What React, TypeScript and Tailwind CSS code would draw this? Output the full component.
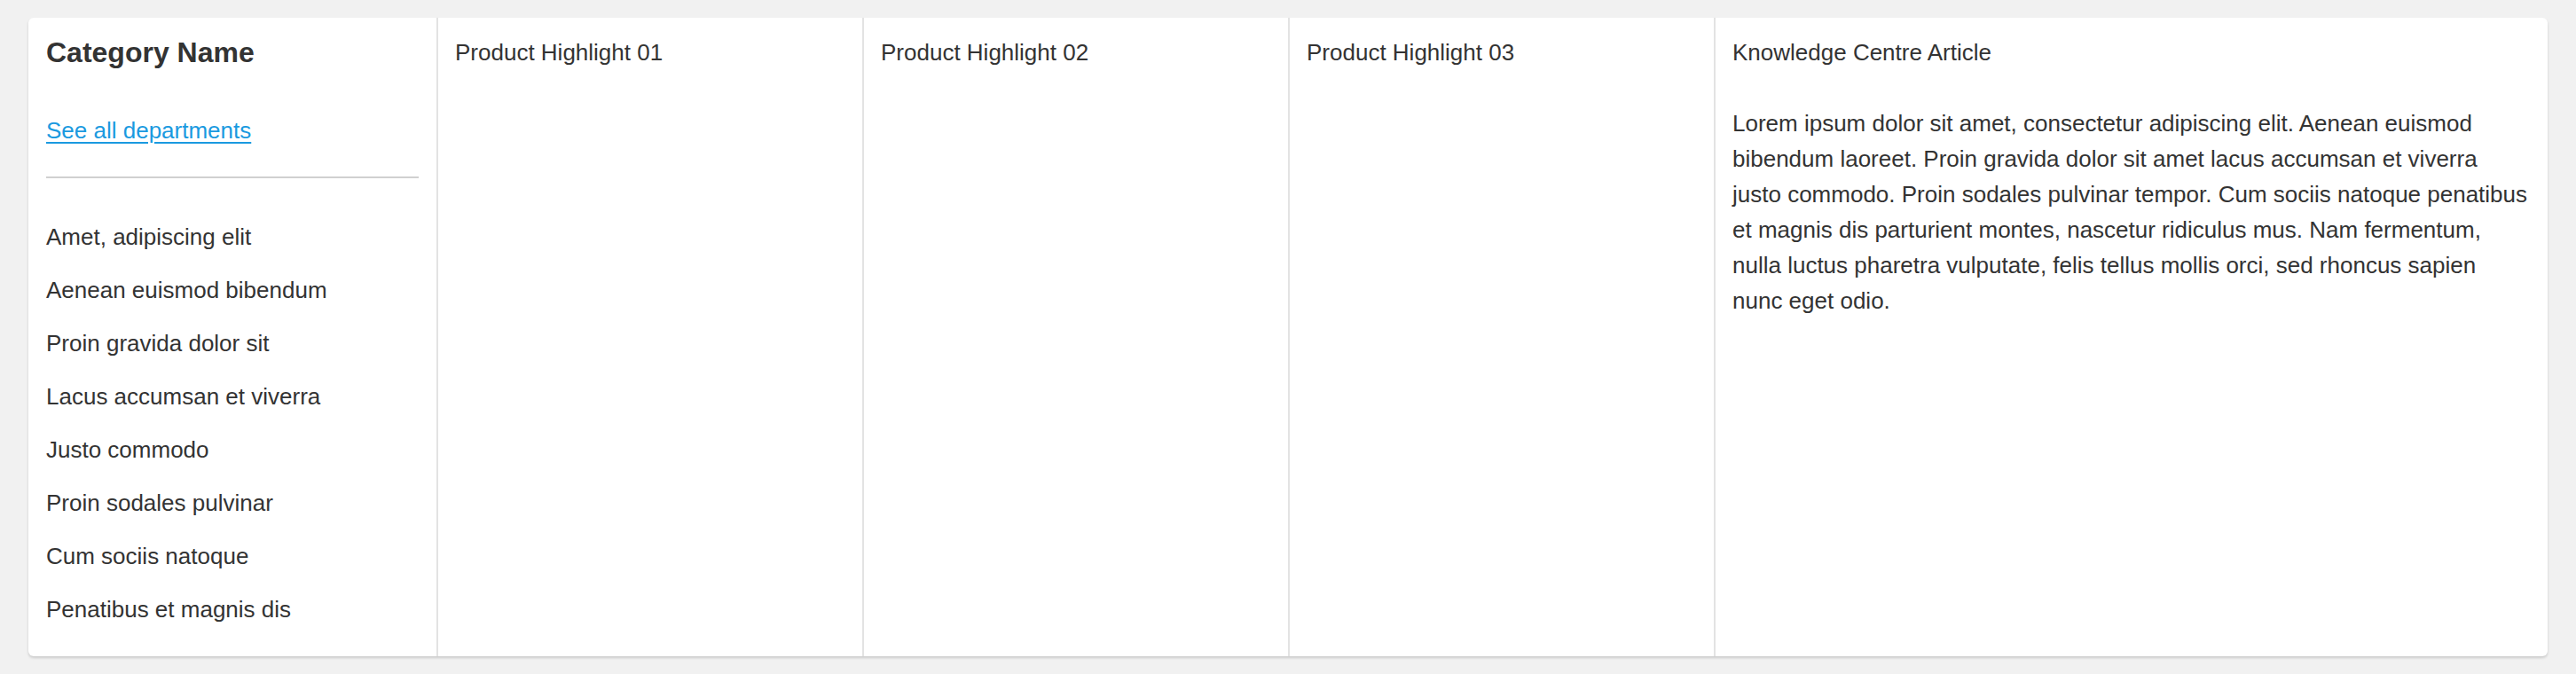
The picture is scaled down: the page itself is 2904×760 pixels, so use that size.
// App.tsx
const departments = [
  'Amet, adipiscing elit',
  'Aenean euismod bibendum',
  'Proin gravida dolor sit',
  'Lacus accumsan et viverra',
  'Justo commodo',
  'Proin sodales pulvinar',
  'Cum sociis natoque',
  'Penatibus et magnis dis',
];

const highlights = ['Product Highlight 01', 'Product Highlight 02', 'Product Highlight 03'];

export default function App() {
  return (
    <div className="min-h-[760px] bg-[#f1f1f1] px-[32px] pt-[20px] pb-[20px] text-[#333333] font-['Liberation_Sans',Arial,sans-serif]">
      <div className="flex rounded-[6px] bg-white shadow-[0_2px_3px_rgba(0,0,0,0.16)]">
        {/* category column */}
        <div className="w-[460px] shrink-0 px-[20px] pt-[19px] pb-[23px]">
          <h2 className="text-[32px] font-bold leading-[40px]">Category Name</h2>
          <a
            href="#"
            className="mt-[48px] block w-fit text-[26px] leading-[40px] text-[#1a9ae0] underline decoration-2 underline-offset-[4px]"
          >
            See all departments
          </a>
          <hr className="mt-[32px] border-0 border-t-2 border-[#d0d0d0]" />
          <ul className="mt-[36px]">
            {departments.map((d) => (
              <li key={d} className="py-[10px] text-[26px] leading-[40px]">
                {d}
              </li>
            ))}
          </ul>
        </div>

        {/* product highlights */}
        {highlights.map((h) => (
          <div key={h} className="w-[480px] shrink-0 border-l-2 border-[#e3e3e3] px-[19px] pt-[19px] pb-[20px]">
            <p className="text-[26px] leading-[40px]">{h}</p>
          </div>
        ))}

        {/* article */}
        <div className="flex-1 border-l-2 border-[#e3e3e3] pl-[19px] pr-[20px] pt-[19px] pb-[20px]">
          <p className="text-[26px] leading-[40px]">Knowledge Centre Article</p>
          <p className="mt-[40px] text-[26px] leading-[40px]">
            Lorem ipsum dolor sit amet, consectetur adipiscing elit. Aenean euismod bibendum laoreet. Proin gravida
            dolor sit amet lacus accumsan et viverra justo commodo. Proin sodales pulvinar tempor. Cum sociis natoque
            penatibus et magnis dis parturient montes, nascetur ridiculus mus. Nam fermentum, nulla luctus pharetra
            vulputate, felis tellus mollis orci, sed rhoncus sapien nunc eget odio.
          </p>
        </div>
      </div>
    </div>
  );
}
